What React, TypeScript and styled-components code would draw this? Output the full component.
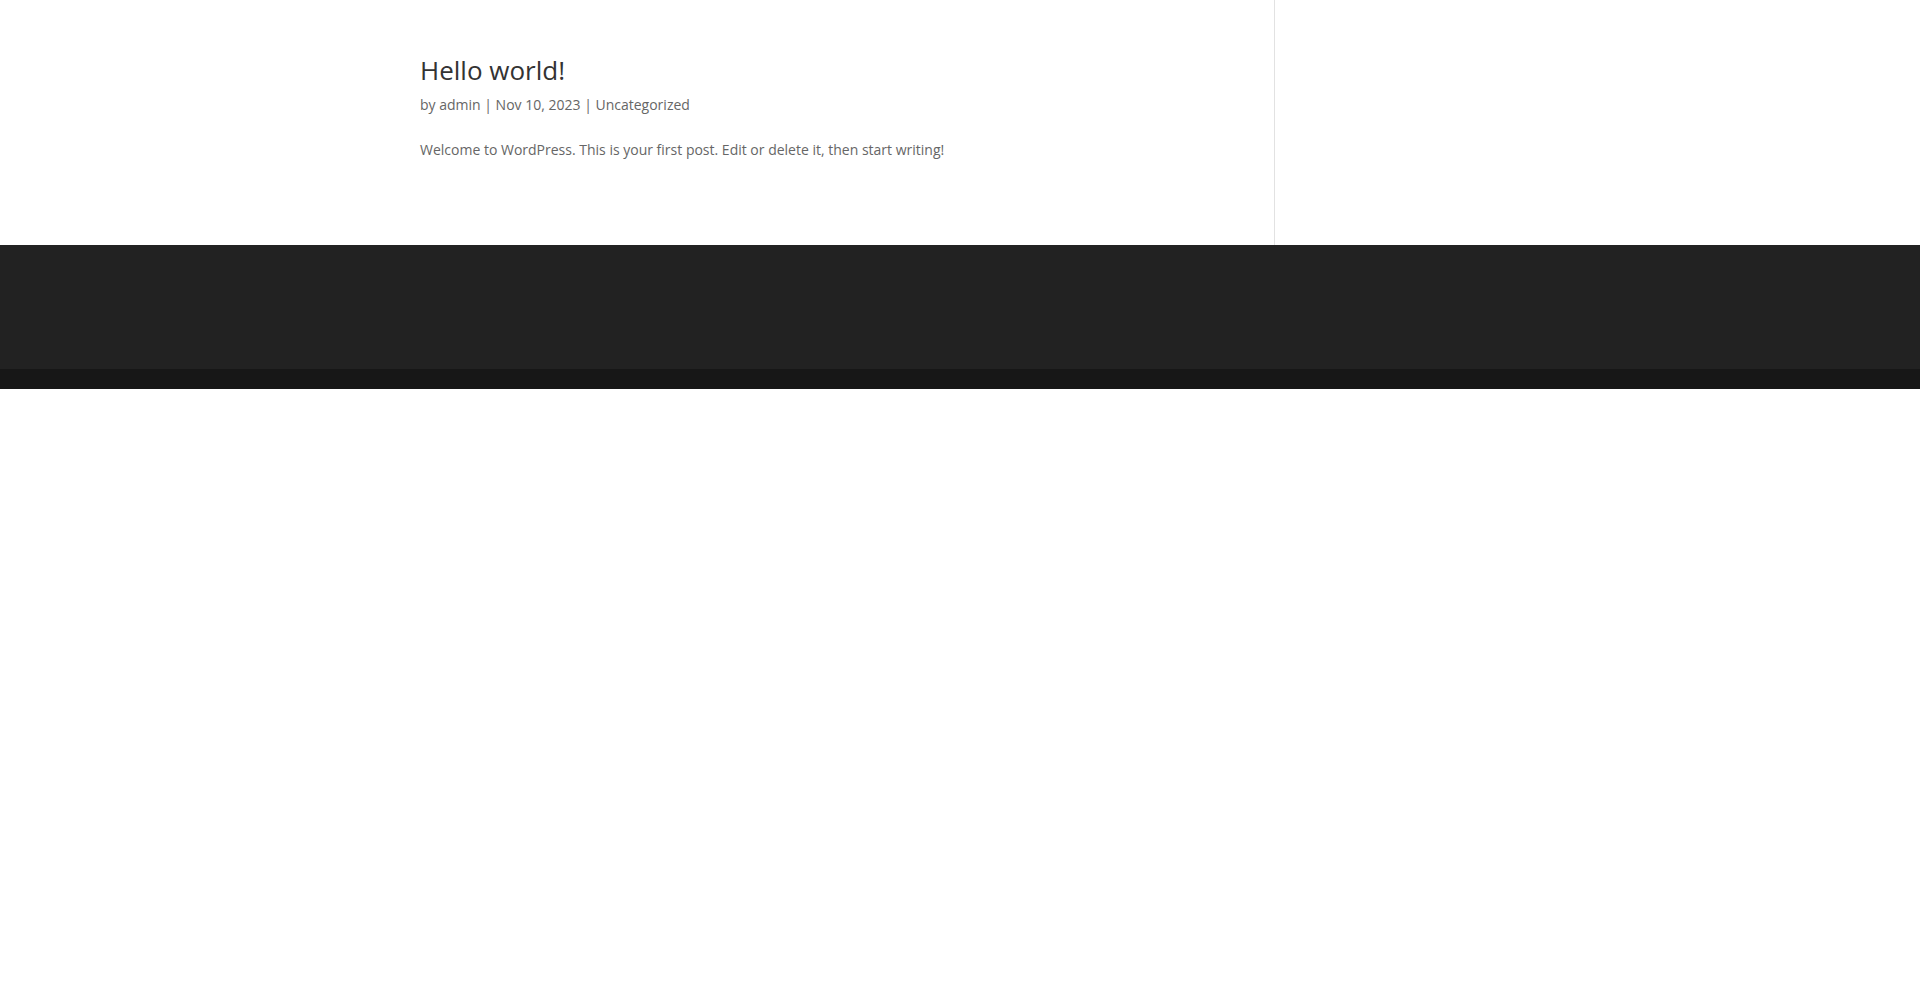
import * as React from 'react';
import styled, { createGlobalStyle } from 'styled-components';

const GlobalStyle = createGlobalStyle`
  html, body {
    margin: 0;
    padding: 0;
    background: #fff;
  }
  body {
    font-family: "Open Sans", Arial, sans-serif;
    font-size: 14px;
    color: #666;
    line-height: 1.7em;
  }
`;

const MainContent = styled.div`
  background: #fff;
`;

const Container = styled.div`
  width: 1080px;
  margin: 0 auto;
  display: grid;
  grid-template-columns: 853.5px 1fr;
`;

const LeftArea = styled.div`
  padding-top: 57px;
  padding-bottom: 23px;
`;

const Sidebar = styled.div`
  border-left: 1px solid #e2e2e2;
`;

const Post = styled.article`
  margin-bottom: 60px;
`;

const Title = styled.h2`
  margin: 0;
  padding-bottom: 10px;
  font-size: 26px;
  font-weight: 400;
  line-height: 1em;
  color: #333;
`;

const Meta = styled.p`
  margin: 0 0 6px;
  color: #666;
`;

const MetaLink = styled.a`
  color: #666;
  text-decoration: none;
`;

const Excerpt = styled.p`
  margin: 0;
  padding-top: 15px;
`;

const FooterWidgets = styled.footer`
  height: 124px;
  background: #222;
`;

const FooterBottom = styled.div`
  height: 20px;
  background: #171717;
`;

export default function App() {
  return (
    <>
      <GlobalStyle />
      <MainContent>
        <Container>
          <LeftArea>
            <Post>
              <Title>Hello world!</Title>
              <Meta>
                by <MetaLink href="#">admin</MetaLink> | Nov 10, 2023 | <MetaLink href="#">Uncategorized</MetaLink>
              </Meta>
              <Excerpt>Welcome to WordPress. This is your first post. Edit or delete it, then start writing!</Excerpt>
            </Post>
          </LeftArea>
          <Sidebar />
        </Container>
      </MainContent>
      <FooterWidgets />
      <FooterBottom />
    </>
  );
}
